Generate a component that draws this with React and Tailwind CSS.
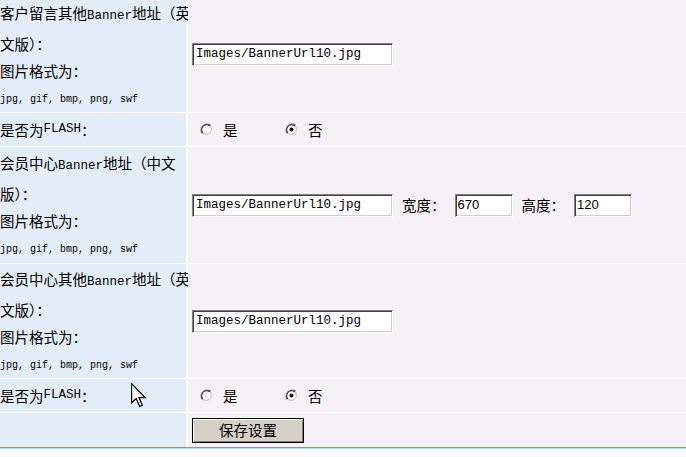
import React from "react";

const cjk = { fontFamily: '"Noto Sans CJK SC", "Noto Sans", sans-serif' };
const mono = { fontFamily: '"Liberation Mono", "DejaVu Sans Mono", monospace' };

function L({ children }) {
  return (
    <span className="text-[12.5px]" style={mono}>
      {children}
    </span>
  );
}

function Radio({ checked }) {
  return (
    <svg width="13" height="13" viewBox="0 0 13 13" className="shrink-0">
      <circle cx="6.5" cy="6.5" r="6" fill="#ffffff" />
      <path d="M2.3 10.7 A6 6 0 0 1 10.7 2.3" fill="none" stroke="#707070" strokeWidth="1.2" />
      <path d="M10.7 2.3 A6 6 0 0 1 2.3 10.7" fill="none" stroke="#e8e6e2" strokeWidth="1.2" />
      <path d="M3 10 A5 5 0 0 1 10 3" fill="none" stroke="#303030" strokeWidth="1.2" />
      <path d="M10 3 A5 5 0 0 1 3 10" fill="none" stroke="#c8c4bc" strokeWidth="1.2" />
      <circle cx="6.5" cy="6.5" r="4" fill="#ffffff" />
      {checked && <circle cx="6.5" cy="6.5" r="2" fill="#000000" />}
    </svg>
  );
}

function TextBox({ value, w = "w-[201px]", sans }) {
  return (
    <div
      className={`${w} h-[23px] flex items-center bg-white border border-t-[#808080] border-l-[#808080] border-b-white border-r-white shadow-[inset_1px_1px_0_#404040,inset_-1px_-1px_0_#d4d0c8] ${
        sans ? "pl-[2px] text-[13px]" : "pl-[3px] text-[12.5px]"
      } text-black whitespace-nowrap overflow-hidden`}
      style={sans ? { fontFamily: '"Liberation Sans", Arial, sans-serif' } : mono}
    >
      {value}
    </div>
  );
}

function FileLabel({ first, second, shift }) {
  return (
    <div className={`flex flex-col ${shift}`}>
      <div className="leading-[27px] whitespace-nowrap">{first}</div>
      <div className="leading-[27px] whitespace-nowrap">{second}</div>
      <div className="leading-[27px] whitespace-nowrap">图片格式为：</div>
      <div className="leading-[32px] text-[10px] whitespace-nowrap" style={mono}>
        jpg, gif, bmp, png, swf
      </div>
    </div>
  );
}

function FlashRow() {
  return (
    <>
      <div className="h-[33px] bg-[#e3edf8] flex items-center whitespace-nowrap">
        是否为<L>FLASH</L>：
      </div>
      <div className="h-[33px] bg-[#f5f2f6] flex items-center pl-[12px]">
        <Radio />
        <span className="ml-[10px] w-[15px]">是</span>
        <span className="ml-[47px] flex items-center">
          <Radio checked />
        </span>
        <span className="ml-[10px]">否</span>
      </div>
    </>
  );
}

export default function App() {
  return (
    <div className="relative w-[686px] h-[457px] overflow-hidden bg-[#fbfafc] text-[14.5px] text-black" style={cjk}>
      <div className="grid grid-cols-[186px_1fr] gap-x-[2px] gap-y-px bg-white">
        <div className="h-[112px] bg-[#e3edf8] flex flex-col justify-start pt-0">
          <FileLabel
            shift="-mt-[1px]"
            first={
              <>
                客户留言其他<L>Banner</L>地址（英
              </>
            }
            second="文版）："
          />
        </div>
        <div className="h-[112px] bg-[#f5f2f6] flex items-center pl-[4px] pb-[4px]">
          <TextBox value="Images/BannerUrl10.jpg" />
        </div>

        <FlashRow />

        <div className="h-[116px] bg-[#e3edf8] flex flex-col pt-[2px]">
          <FileLabel
            first={
              <>
                会员中心<L>Banner</L>地址（中文
              </>
            }
            second="版）："
          />
        </div>
        <div className="h-[116px] bg-[#f5f2f6] flex items-center pl-[4px]">
          <TextBox value="Images/BannerUrl10.jpg" />
          <span className="ml-[9px]">宽度：</span>
          <span className="ml-[9px]">
            <TextBox value="670" w="w-[58px]" sans />
          </span>
          <span className="ml-[9px]">高度：</span>
          <span className="ml-[9px]">
            <TextBox value="120" w="w-[58px]" sans />
          </span>
        </div>

        <div className="h-[114px] bg-[#e3edf8] flex flex-col pt-[1px]">
          <FileLabel
            first={
              <>
                会员中心其他<L>Banner</L>地址（英
              </>
            }
            second="文版）："
          />
        </div>
        <div className="h-[114px] bg-[#f5f2f6] flex items-center pl-[4px]">
          <TextBox value="Images/BannerUrl10.jpg" />
        </div>

        <FlashRow />

        <div className="h-[34px] bg-[#e3edf8]"></div>
        <div className="h-[34px] bg-[#f5f2f6] flex items-center pl-[4px]">
          <button className="w-[112px] h-[25px] bg-[#d4d0c8] border border-black shadow-[inset_1px_1px_0_#ffffff,inset_-1px_-1px_0_#808080] text-[14.5px] leading-none text-black">
            保存设置
          </button>
        </div>
      </div>
      <div className="h-px bg-[#5d9fdf]"></div>
      <div className="h-px bg-[#bcd7f1]"></div>

      <svg
        className="absolute left-[131px] top-[383px]"
        width="16"
        height="26"
        viewBox="0 0 13 21"
      >
        <path
          d="M0.5 0.5 L0.5 16 L4.2 12.5 L7 19 L9.2 18 L6.5 11.8 L11.5 11.8 Z"
          fill="#ffffff"
          stroke="#000000"
          strokeWidth="1"
          strokeLinejoin="miter"
        />
      </svg>
    </div>
  );
}
